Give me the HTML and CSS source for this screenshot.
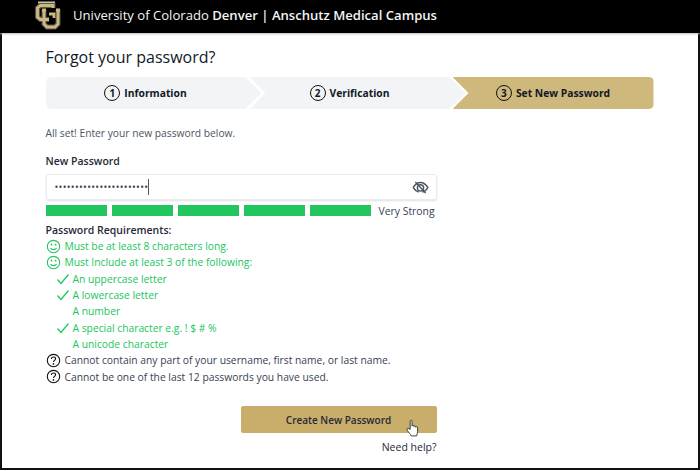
FILE: index.html
```html
<!DOCTYPE html>
<html lang="en">
<head>
<meta charset="utf-8">
<title>Forgot your password?</title>
<link rel="stylesheet" href="styles.css">
</head>
<body>
<div class="frame">
  <header class="topbar">
    <svg class="logo" viewBox="0 0 28 30" width="28" height="30" aria-hidden="true">
      <path class="logo-back" d="M4 2.500H21"/>
      <path class="logo-out" d="M19 8V5.500H6.500L3.500 8V17L6.500 19.500H15"/>
      <path class="logo-out" d="M10 10V24L13 27H21L24 24V10"/>
      <path class="logo-in" d="M19 8V5.500H6.500L3.500 8V17L6.500 19.500H15"/>
      <path class="logo-in" d="M10 10V24L13 27H21L24 24V10"/>
      <path class="logo-in" d="M8 10H12M22 10H26M15 14H20V18"/>
    </svg>
    <div class="brand">University of Colorado <span class="brand-strong">Denver | Anschutz Medical Campus</span></div>
  </header>
  <main class="page">
    <h1 class="title">Forgot your password?</h1>
    <ol class="steps">
      <li class="step step-first"><span class="num">1</span>Information</li>
      <li class="step step-mid"><span class="num">2</span>Verification</li>
      <li class="step step-last"><span class="num">3</span>Set New Password</li>
    </ol>
    <p class="intro">All set! Enter your new password below.</p>
    <form class="form">
      <div class="label">New Password</div>
      <div class="input">
        <span class="dots">•••••••••••••••••••••••</span><span class="caret"></span>
        <svg class="eye" viewBox="0 0 18 14" width="17" height="13" aria-hidden="true">
          <path d="M1 7C3.500 3.200 6 1.600 9 1.600S14.500 3.200 17 7C15.500 9.600 13.500 11.500 11 12"/>
          <path d="M1 7C2.500 9.200 4.500 11 7 12"/>
          <circle cx="9" cy="7.500" r="3.400"/>
          <path d="M3.500 1L14.500 13"/>
        </svg>
      </div>
      <div class="strength">
        <div class="bars"><i class="bar"></i><i class="bar"></i><i class="bar"></i><i class="bar"></i><i class="bar"></i></div>
        <span class="strength-label">Very Strong</span>
      </div>
      <div class="req-title">Password Requirements:</div>
      <ul class="reqs">
        <li class="req ok"><svg class="ico" viewBox="0 0 16 16"><circle cx="8" cy="8" r="6.600"/><path d="M4.800 9.500C6 12 10 12 11.200 9.500"/><circle class="fill" cx="5.800" cy="6" r=".9"/><circle class="fill" cx="10.200" cy="6" r=".9"/></svg>Must be at least 8 characters long.</li>
        <li class="req ok"><svg class="ico" viewBox="0 0 16 16"><circle cx="8" cy="8" r="6.600"/><path d="M4.800 9.500C6 12 10 12 11.200 9.500"/><circle class="fill" cx="5.800" cy="6" r=".9"/><circle class="fill" cx="10.200" cy="6" r=".9"/></svg>Must Include at least 3 of the following:</li>
        <li class="req ok sub"><svg class="check" viewBox="0 0 14 12"><path d="M1.500 6.500L5 10.500L12.500 1.500"/></svg>An uppercase letter</li>
        <li class="req ok sub"><svg class="check" viewBox="0 0 14 12"><path d="M1.500 6.500L5 10.500L12.500 1.500"/></svg>A lowercase letter</li>
        <li class="req ok sub nocheck">A number</li>
        <li class="req ok sub"><svg class="check" viewBox="0 0 14 12"><path d="M1.500 6.500L5 10.500L12.500 1.500"/></svg>A special character e.g. ! $ # %</li>
        <li class="req ok sub nocheck">A unicode character</li>
        <li class="req"><svg class="ico" viewBox="0 0 16 16"><circle cx="8" cy="8" r="6.600"/><path d="M5.800 6.300C5.800 3.500 10.200 3.600 10.200 6.200C10.200 7.900 8 7.800 8 9.600"/><circle class="fill" cx="8" cy="11.600" r=".9"/></svg>Cannot contain any part of your username, first name, or last name.</li>
        <li class="req"><svg class="ico" viewBox="0 0 16 16"><circle cx="8" cy="8" r="6.600"/><path d="M5.800 6.300C5.800 3.500 10.200 3.600 10.200 6.200C10.200 7.900 8 7.800 8 9.600"/><circle class="fill" cx="8" cy="11.600" r=".9"/></svg>Cannot be one of the last 12 passwords you have used.</li>
      </ul>
      <div class="actions">
        <button class="submit" type="button">Create New Password
          <svg class="hand" viewBox="0 0 14 19" width="13" height="18" aria-hidden="true"><path d="M4.500 11V2.200C4.500 .7 6.500 .7 6.500 2.200V7.500C6.500 6.300 8.500 6.300 8.500 7.700V8C8.500 7 10.500 7 10.500 8.300V8.700C10.500 7.800 12.500 7.800 12.500 9.300V13C12.500 15 11.800 16 11.500 18H5.500C5 16 2.800 14.500 1.400 12C.4 10.200 2 9.200 3.200 10.300Z"/></svg>
        </button>
        <a class="help">Need help?</a>
      </div>
    </form>
  </main>
</div>
</body>
</html>
```
FILE: styles.css
```css
* { box-sizing: border-box; }
html, body { margin: 0; padding: 0; background: #fff; }
body { font-family: "Open Sans", "Noto Sans", sans-serif; color: #1f2937; overflow: hidden; }
.frame { width: 700px; height: 470px; border-bottom: 2px solid #111; box-shadow: 0 1px 0 #aaa; display: flex; flex-direction: column; }
.topbar { height: 33px; flex: none; background: #000; display: flex; align-items: flex-start; padding-left: 34px; box-shadow: 0 1px 2px #bbb; position: relative; }
.logo { flex: none; margin-top: 0; }
.logo path { fill: none; stroke-linejoin: miter; }
.logo-back { stroke: #cfc4a0; stroke-width: 2; }
.logo-out { stroke: #555; stroke-width: 5; }
.logo-in { stroke: #cfb87c; stroke-width: 2.800; }
.brand { margin-left: 11px; color: #f3f4f6; font-size: 13.100px; line-height: 30px; white-space: nowrap; }
.brand-strong { font-weight: 600; }
.page { flex: 1; border-left: 2.500px solid #111; border-right: 2.500px solid #111; padding: 13px 0 0 43.500px; }
.title { margin: 0; font-size: 16px; line-height: 22px; font-weight: 500; color: #111827; }
.steps { list-style: none; margin: 9px 0 0; padding: 0; display: flex; width: 608px; height: 32px; }
.step { flex: none; display: flex; align-items: center; justify-content: center; font-size: 10.300px; font-weight: 700; color: #111827; background: #f3f4f6; }
.step-first { width: 216px; margin-right: -12px; padding-right: 16px; border-radius: 5px 0 0 5px; clip-path: polygon(0 0, calc(100% - 16px) 0, 100% 50%, calc(100% - 16px) 100%, 0 100%); }
.step-mid { width: 216px; margin-right: -13px; padding-right: 16px; clip-path: polygon(0 0, calc(100% - 16px) 0, 100% 50%, calc(100% - 16px) 100%, 0 100%, 16px 50%); }
.step-last { width: 201px; background: #cfb87c; border-radius: 0 5px 5px 0; clip-path: polygon(0 0, 100% 0, 100% 100%, 0 100%, 16px 50%); }
.num { width: 16px; height: 16px; border: 1.500px solid #111; border-radius: 50%; margin-right: 4px; display: flex; align-items: center; justify-content: center; font-size: 10px; line-height: 1; }
.intro { margin: 16px 0 0; font-size: 10.250px; line-height: 16px; color: #4b5563; }
.form { width: 391px; margin-top: 12px; }
.label { font-size: 10.500px; font-weight: 600; line-height: 16px; }
.input { height: 26px; margin-top: 5px; border: 1px solid #e9ebee; border-radius: 3px; box-shadow: 0 1px 2px rgba(0,0,0,.12); display: flex; align-items: center; padding-left: 8px; padding-right: 7px; }
.dots { font-size: 10px; letter-spacing: 0.320px; color: #374151; line-height: 1; white-space: nowrap; }
.caret { width: 1px; height: 16px; background: #555; margin-left: 0; }
.eye { margin-left: auto; flex: none; }
.eye path, .eye circle { fill: none; stroke: #4b5563; stroke-width: 1.500; }
.strength { display: flex; align-items: center; margin-top: 4px; height: 13px; }
.bars { width: 325px; display: grid; grid-template-columns: repeat(5, 1fr); gap: 5px; }
.bar { display: block; height: 11px; background: #22c55e; }
.strength-label { margin-left: 8px; font-size: 10.400px; color: #374151; white-space: nowrap; }
.req-title { margin-top: 5px; font-size: 10.500px; font-weight: 600; line-height: 16px; }
.reqs { list-style: none; margin: 0; padding: 0; }
.req { height: 16.300px; display: flex; align-items: center; font-size: 10.300px; white-space: nowrap; color: #374151; }
.req.ok { color: #22c55e; }
.ico { width: 15px; height: 15px; margin-left: 0; margin-right: 4px; flex: none; }
.ico circle, .ico path { fill: none; stroke: currentColor; stroke-width: 1.200; }
.req:not(.ok) .ico { color: #111; }
.ico .fill { fill: currentColor; stroke: none; }
.sub { padding-left: 10px; }
.check { width: 14px; height: 12px; margin-right: 3px; flex: none; }
.check path { fill: none; stroke: currentColor; stroke-width: 1.300; }
.nocheck { padding-left: 27px; }
.actions { margin-top: 21px; display: flex; flex-direction: column; align-items: flex-end; }
.submit { position: relative; width: 196px; height: 27px; border: 0; border-radius: 2px; background: #c9ad6a; color: #1f2937; font-family: inherit; font-size: 10px; font-weight: 600; padding: 1px 0 0; }
.hand { position: absolute; left: 165px; top: 13px; }
.hand path { fill: #fff; stroke: #333; stroke-width: 1; stroke-linejoin: round; }
.help { margin-top: 6px; font-size: 10.500px; line-height: 16px; color: #1f2937; }
```
